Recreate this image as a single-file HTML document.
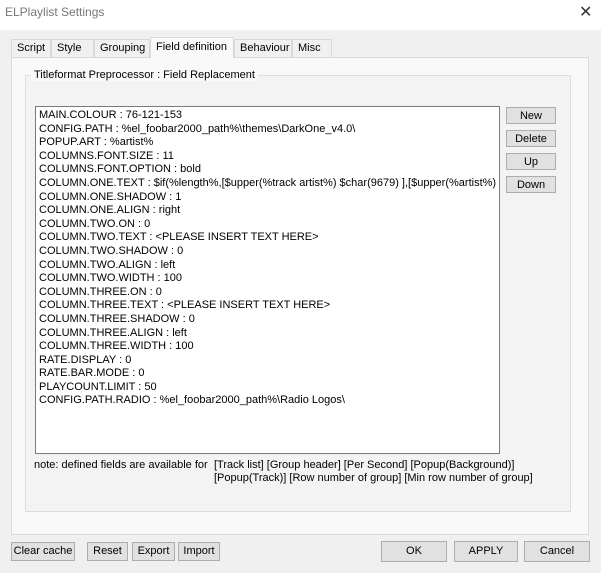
<!DOCTYPE html>
<html><head><style>
body{margin:0;width:601px;height:573px;background:#f0f0f0;font-family:"Liberation Sans",sans-serif;font-size:11px;color:#000;position:relative;overflow:hidden}
.a{position:absolute}
.title{left:0;top:0;width:601px;height:30px;background:#fff}
.btn{position:absolute;background:#e1e1e1;border:1px solid #adadad;box-sizing:border-box;text-align:center;font-size:11px;line-height:16px}
.tab{position:absolute;top:39px;height:18px;border:1px solid #d9d9d9;border-bottom:none;background:#f0f0f0;box-sizing:border-box;line-height:16px;padding-left:5px}
</style></head><body>
<div class="a title"></div>
<div class="a" style="left:5px;top:5px;font-size:12px;color:#777">ELPlaylist Settings</div>
<div class="a" style="left:579px;top:2px;font-size:16px;color:#333">✕</div>
<div class="a" style="left:11px;top:57px;width:578px;height:478px;border:1px solid #d9d9d9;background:#f9f9f9;box-sizing:border-box"></div>
<div class="tab" style="left:11px;width:40px">Script</div>
<div class="tab" style="left:51px;width:43px">Style</div>
<div class="tab" style="left:94px;width:56px">Grouping</div>
<div class="tab" style="left:150px;top:37px;height:21px;width:84px;background:#f9f9f9;line-height:18px">Field definition</div>
<div class="tab" style="left:234px;width:58px">Behaviour</div>
<div class="tab" style="left:292px;width:40px">Misc</div>
<div class="a" style="left:25px;top:75px;width:546px;height:437px;border:1px solid #dcdcdc;box-sizing:border-box;background:#f3f3f3"></div>
<div class="a" style="left:31px;top:69px;background:#f9f9f9;padding:0 3px">Titleformat Preprocessor : Field Replacement</div>
<div class="a" style="left:35px;top:106px;width:465px;height:348px;background:#fff;border:1px solid #7a7a7a;box-sizing:border-box;padding:2px 3px;line-height:13.6px;white-space:pre;overflow:hidden">MAIN.COLOUR : 76-121-153
CONFIG.PATH : %el_foobar2000_path%\themes\DarkOne_v4.0\
POPUP.ART : %artist%
COLUMNS.FONT.SIZE : 11
COLUMNS.FONT.OPTION : bold
COLUMN.ONE.TEXT : $if(%length%,[$upper(%track artist%) $char(9679) ],[$upper(%artist%) $char(9679) ])
COLUMN.ONE.SHADOW : 1
COLUMN.ONE.ALIGN : right
COLUMN.TWO.ON : 0
COLUMN.TWO.TEXT : &lt;PLEASE INSERT TEXT HERE&gt;
COLUMN.TWO.SHADOW : 0
COLUMN.TWO.ALIGN : left
COLUMN.TWO.WIDTH : 100
COLUMN.THREE.ON : 0
COLUMN.THREE.TEXT : &lt;PLEASE INSERT TEXT HERE&gt;
COLUMN.THREE.SHADOW : 0
COLUMN.THREE.ALIGN : left
COLUMN.THREE.WIDTH : 100
RATE.DISPLAY : 0
RATE.BAR.MODE : 0
PLAYCOUNT.LIMIT : 50
CONFIG.PATH.RADIO : %el_foobar2000_path%\Radio Logos\</div>
<div class="btn" style="left:506px;top:107px;width:50px;height:17px">New</div>
<div class="btn" style="left:506px;top:130px;width:50px;height:17px">Delete</div>
<div class="btn" style="left:506px;top:153px;width:50px;height:17px">Up</div>
<div class="btn" style="left:506px;top:176px;width:50px;height:17px">Down</div>
<div class="a" style="left:34px;top:459px">note: defined fields are available for</div>
<div class="a" style="left:214px;top:459px;line-height:13px">[Track list] [Group header] [Per Second] [Popup(Background)]<br>[Popup(Track)] [Row number of group] [Min row number of group]</div>
<div class="btn" style="left:11px;top:542px;width:64px;height:19px;line-height:17px">Clear cache</div>
<div class="btn" style="left:87px;top:542px;width:41px;height:19px;line-height:17px">Reset</div>
<div class="btn" style="left:132px;top:542px;width:43px;height:19px;line-height:17px">Export</div>
<div class="btn" style="left:178px;top:542px;width:42px;height:19px;line-height:17px">Import</div>
<div class="btn" style="left:381px;top:541px;width:66px;height:21px;line-height:19px">OK</div>
<div class="btn" style="left:454px;top:541px;width:64px;height:21px;line-height:19px">APPLY</div>
<div class="btn" style="left:524px;top:541px;width:66px;height:21px;line-height:19px">Cancel</div>
</body></html>
